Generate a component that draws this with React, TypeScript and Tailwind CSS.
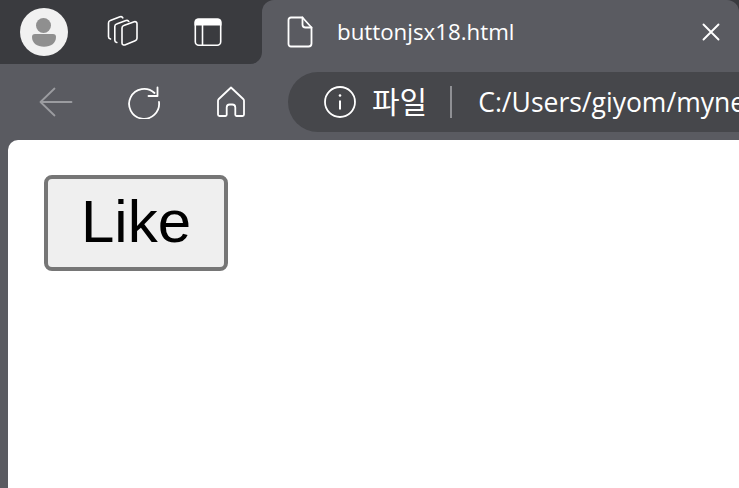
import React from "react";

const sans = { fontFamily: '"Open Sans", "Noto Sans CJK KR", sans-serif' };

function Profile() {
  return (
    <svg width="48" height="48" viewBox="0 0 48 48" className="shrink-0">
      <circle cx="24" cy="24" r="24" fill="#f1f1f1" />
      <circle cx="23.500" cy="17.500" r="7.500" fill="#8f8f8f" />
      <path d="M12 29c0-2 1-3 3-3h18c2 0 3 1 3 3 0 6-5 9.800-12 9.800S12 35 12 29z" fill="#8f8f8f" />
    </svg>
  );
}

function Workspaces() {
  return (
    <svg width="34" height="34" viewBox="0 0 34 34" className="shrink-0" fill="none" stroke="#fff" strokeWidth="1.600" strokeLinecap="round" strokeLinejoin="round">
      <path d="M4.500 24c-1.200-.3-2-1-2-2.200V8c0-1.200.6-2 1.800-2.400L14 1.800c1.200-.4 2.300 0 2.800 1" />
      <path d="M10.800 27.500c-1.200-.3-2-1-2-2.200V11.500c0-1.200.6-2 1.800-2.400l9.400-3.600c1.200-.4 2.300 0 2.800 1" />
      <path d="M16 13c0-1.200.6-2 1.800-2.400l10.400-3.800c1.500-.5 2.800.4 2.800 2v14.500c0 1.200-.6 2-1.800 2.400l-10.400 4.200c-1.500.5-2.800-.4-2.800-2z" />
    </svg>
  );
}

function Vertical() {
  return (
    <svg width="30" height="30" viewBox="0 0 30 30" className="shrink-0" fill="none">
      <path d="M5 1.500h20A3.500 3.500 0 0 1 28.500 5v3.500H1.500V5A3.500 3.500 0 0 1 5 1.500z" fill="#fff" />
      <rect x="2.300" y="2.300" width="25.400" height="25.900" rx="3.500" stroke="#fff" strokeWidth="1.600" />
      <path d="M9.500 8v20" stroke="#fff" strokeWidth="1.600" />
    </svg>
  );
}

function Back() {
  return (
    <svg width="36" height="32" viewBox="0 0 36 32" className="shrink-0" fill="none" stroke="#9b9ca0" strokeWidth="1.800" strokeLinecap="round" strokeLinejoin="round">
      <path d="M2.500 16h31M16.500 2.500 2.500 16l14 13.500" />
    </svg>
  );
}

function Reload() {
  return (
    <svg width="34" height="34" viewBox="0 0 34 34" className="shrink-0" fill="none" stroke="#fff" strokeWidth="1.800" strokeLinecap="round" strokeLinejoin="round">
      <path d="M27.500 8A15 15 0 1 0 32 17" />
      <path d="M30.500 2.500v8.500H21.500" />
    </svg>
  );
}

function Home() {
  return (
    <svg width="30" height="32" viewBox="0 0 30 32" className="shrink-0" fill="none" stroke="#fff" strokeWidth="1.800" strokeLinecap="round" strokeLinejoin="round">
      <path d="M15 1.500 2.800 13c-.5.500-.8 1-.8 1.800v13.700c0 1 .7 1.500 1.500 1.500h6c.8 0 1.200-.5 1.200-1.200v-7.300c0-1.800 1.200-3 3-3h2.600c1.800 0 3 1.200 3 3v7.300c0 .7.400 1.200 1.200 1.200h6c.8 0 1.500-.5 1.500-1.500V14.800c0-.8-.3-1.300-.8-1.800z" />
    </svg>
  );
}

function FileIcon() {
  return (
    <svg width="26" height="32" viewBox="0 0 26 32" className="shrink-0" fill="none" stroke="#fff" strokeWidth="1.800" strokeLinecap="round" strokeLinejoin="round">
      <path d="M4 1.500h11.500l9 10v16c0 1.800-1.200 3-3 3H4c-1.500 0-2.500-1-2.500-2.500V4c0-1.500 1-2.500 2.500-2.500z" />
      <path d="M15.500 1.500v7c0 2 1 3 3 3h6" />
    </svg>
  );
}

function Close() {
  return (
    <svg width="18" height="18" viewBox="0 0 18 18" className="shrink-0" stroke="#fff" strokeWidth="1.900" strokeLinecap="round">
      <path d="M1.500 1.500l15 15M16.500 1.500l-15 15" />
    </svg>
  );
}

function Info() {
  return (
    <svg width="32" height="32" viewBox="0 0 32 32" className="shrink-0" fill="none" stroke="#fff">
      <circle cx="16" cy="16" r="15" strokeWidth="1.800" />
      <path d="M16 14.500v9" strokeWidth="2" />
      <circle cx="16" cy="9.500" r="1.300" fill="#fff" stroke="none" />
    </svg>
  );
}

export default function App() {
  return (
    <div className="flex h-[488px] w-[739px] flex-col overflow-hidden bg-[#5a5b61]" style={sans}>
      <div className="flex h-16 shrink-0">
        <div className="flex w-[262px] shrink-0 items-center rounded-br-[12px] bg-[#3a3b3f] pl-5">
          <Profile />
          <div className="ml-[38px] flex shrink-0"><Workspaces /></div>
          <div className="ml-[53px] flex shrink-0"><Vertical /></div>
        </div>
        <div className="min-w-0 flex-1 bg-[#3a3b3f]">
          <div className="flex h-16 items-center rounded-t-[12px] bg-[#5a5b61] pl-[25px] pr-[19px]">
            <FileIcon />
            <span className="ml-[24px] flex-1 text-[22.300px] leading-none text-white">buttonjsx18.html</span>
            <Close />
          </div>
        </div>
      </div>
      <div className="flex h-[76px] shrink-0 items-center pl-[38px]">
        <Back />
        <div className="ml-[53px] flex shrink-0"><Reload /></div>
        <div className="ml-[55px] flex shrink-0"><Home /></div>
        <div className="ml-[42px] flex h-[60px] min-w-0 flex-1 items-center overflow-hidden rounded-l-[30px] bg-[#46474b] pl-9">
          <Info />
          <span className="ml-[16px] shrink-0 text-[30px] leading-none text-white">파일</span>
          <div className="ml-[23px] h-8 w-[2px] shrink-0 bg-[#8f9094]" />
          <span className="ml-[26px] shrink-0 whitespace-nowrap text-[26.500px] leading-none text-white">C:/Users/giyom/myne</span>
        </div>
      </div>
      <div className="ml-2 flex-1 rounded-tl-[10px] bg-white pl-9 pt-[35px]">
        <button
          className="flex h-24 w-[184px] items-center justify-center rounded-[8px] border-[4px] border-[#767676] bg-[#efefef] pb-[3px] text-[60px] leading-none text-black"
          style={{ fontFamily: '"Liberation Sans", Arial, sans-serif' }}
        >
          Like
        </button>
      </div>
    </div>
  );
}
